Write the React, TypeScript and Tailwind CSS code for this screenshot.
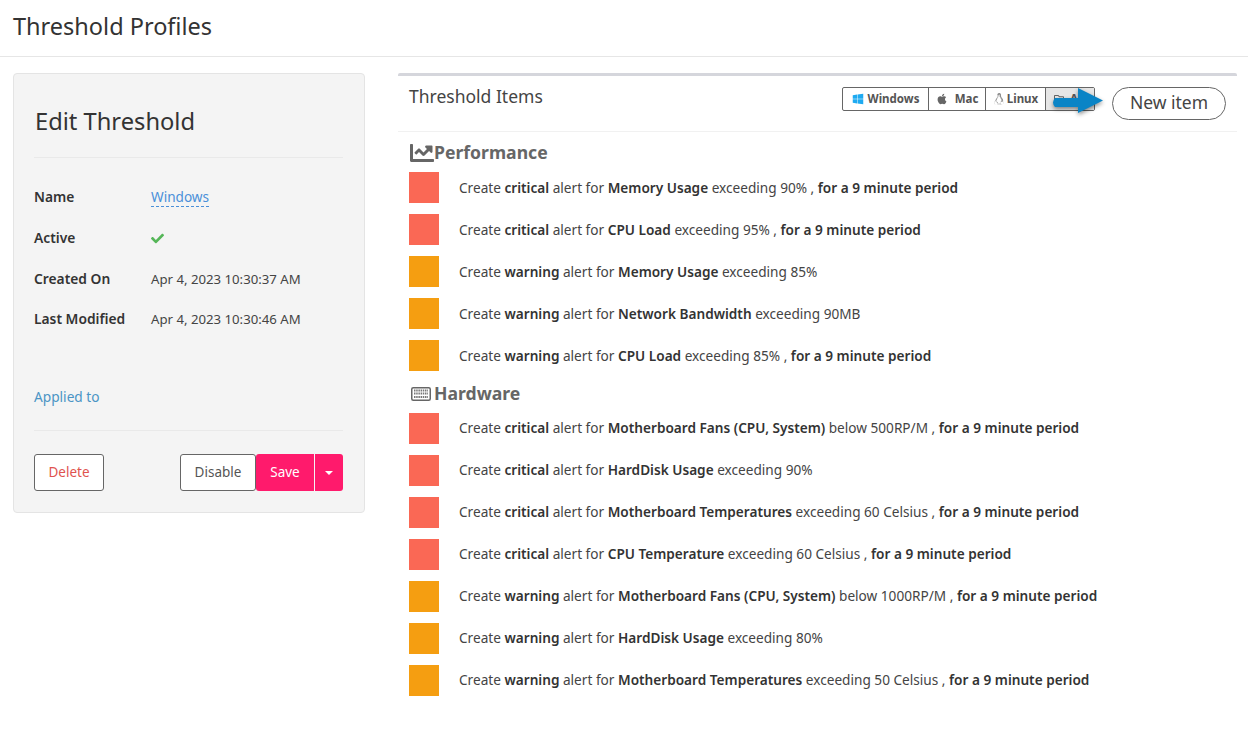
import { FaWindows, FaApple, FaLinux, FaChartLine, FaCheck, FaRegFolderOpen } from 'react-icons/fa'

// --- data ---
type Item = { level: 'critical' | 'warning'; metric: string; rest: string; period?: boolean }

const PERFORMANCE: Item[] = [
  { level: 'critical', metric: 'Memory Usage', rest: 'exceeding 90%', period: true },
  { level: 'critical', metric: 'CPU Load', rest: 'exceeding 95%', period: true },
  { level: 'warning', metric: 'Memory Usage', rest: 'exceeding 85%' },
  { level: 'warning', metric: 'Network Bandwidth', rest: 'exceeding 90MB' },
  { level: 'warning', metric: 'CPU Load', rest: 'exceeding 85%', period: true },
]

const HARDWARE: Item[] = [
  { level: 'critical', metric: 'Motherboard Fans (CPU, System)', rest: 'below 500RP/M', period: true },
  { level: 'critical', metric: 'HardDisk Usage', rest: 'exceeding 90%' },
  { level: 'critical', metric: 'Motherboard Temperatures', rest: 'exceeding 60 Celsius', period: true },
  { level: 'critical', metric: 'CPU Temperature', rest: 'exceeding 60 Celsius', period: true },
  { level: 'warning', metric: 'Motherboard Fans (CPU, System)', rest: 'below 1000RP/M', period: true },
  { level: 'warning', metric: 'HardDisk Usage', rest: 'exceeding 80%' },
  { level: 'warning', metric: 'Motherboard Temperatures', rest: 'exceeding 50 Celsius', period: true },
]

function Row({ item, tight }: { item: Item; tight?: boolean }) {
  return (
    <div className="flex items-center h-[31px] mb-[11px]">
      <div className={`w-[30px] h-[31px] shrink-0 ${item.level === 'critical' ? 'bg-[#fa6855]' : 'bg-[#f59e11]'}`}></div>
      <p className={`ml-[20px] text-[13.63px] text-[#444] whitespace-nowrap ${tight ? 'mt-0' : 'mt-[2px]'}`}>
        Create <b className="font-semibold text-[#333]">{item.level}</b> alert for{' '}
        <b className="font-semibold text-[#333]">{item.metric}</b> {item.rest}
        {item.period && (
          <>
            {' , '}
            <b className="font-semibold text-[#333]">for a 9 minute period</b>
          </>
        )}
      </p>
    </div>
  )
}

function InfoRow({ label, children }: { label: string; children: React.ReactNode }) {
  return (
    <div className="flex items-center h-[41px] last:h-[39px]">
      <div className="w-[117px] font-semibold text-[#333] text-[13.8px]">{label}</div>
      <div className="text-[13.2px] text-[#444]">{children}</div>
    </div>
  )
}

function KeyboardIcon() {
  return (
    <svg className="ml-[2px] mr-[3px] shrink-0" width="20" height="14" viewBox="0 0 20 14">
      <rect x="0.75" y="0.75" width="18.5" height="12.5" rx="1.5" fill="none" stroke="#666" strokeWidth="1.5" />
      <path d="M3 3.5h14M3 6.5h14M3 10h14" stroke="#777" strokeWidth="2" strokeDasharray="1.5 0.7" fill="none" />
    </svg>
  )
}

export default function App() {
  return (
    <div className="min-h-[732px] bg-white font-['Noto_Sans',sans-serif] text-[#333]">
      <header className="h-[57px] border-b border-[#e6e6e6] pl-[13px] flex items-center">
        <h1 className="text-[23.5px] leading-none text-[#333] mt-[-3px]">Threshold Profiles</h1>
      </header>

      <div className="flex items-start pt-4 pl-[13px] pr-[11px]">
        {/* left card */}
        <aside className="w-[352px] h-[440px] shrink-0 bg-[#f4f4f4] border border-[#e4e4e4] rounded-[4px] pl-5 pr-[21px] flex flex-col">
          <h2 className="text-[23.7px] leading-[24px] text-[#333] pt-[35px] pb-[24px] pl-px border-b border-[#e9e9e9]">Edit Threshold</h2>
          <div className="mt-[19px]">
            <InfoRow label="Name">
              <span className="text-[13.6px] text-[#4a90d9] border-b border-dashed border-[#4a90d9] leading-[18px] inline-block">Windows</span>
            </InfoRow>
            <InfoRow label="Active">
              <FaCheck className="text-[#55b658] text-[13px]" />
            </InfoRow>
            <InfoRow label="Created On">Apr 4, 2023 10:30:37 AM</InfoRow>
            <InfoRow label="Last Modified">Apr 4, 2023 10:30:46 AM</InfoRow>
          </div>
          <a className="mt-[48px] text-[13.7px] text-[#4b94c5] leading-[20px]">Applied to</a>
          <div className="mt-[23px] border-b border-[#e9e9e9]"></div>
          <div className="mt-[23px] flex items-stretch h-[37px]">
            <button className="w-[70px] bg-white border border-[#666] rounded-[3px] text-[13.5px] text-[#e0534f]">Delete</button>
            <div className="ml-auto flex">
              <button className="w-[76px] bg-white border border-[#666] rounded-[3px] text-[13.5px] text-[#555]">Disable</button>
              <button className="w-[58px] bg-[#ff1a6c] rounded-l-[3px] text-[13.5px] text-white">Save</button>
              <button className="w-[28px] ml-px bg-[#ff1a6c] rounded-r-[3px] flex items-center justify-center">
                <span className="w-0 h-0 border-x-[4px] border-x-transparent border-t-[4px] border-t-white"></span>
              </button>
            </div>
          </div>
        </aside>

        {/* right panel */}
        <main className="ml-[33px] flex-1 border-t-[3px] border-[#d5d6dc] rounded-t-[2px]">
          <div className="h-[56px] border-b border-[#f1f1f1] pl-[11px] pr-[11px] flex items-start">
            <h3 className="text-[17.5px] leading-none text-[#444] mt-[12px]">Threshold Items</h3>
            <div className="relative ml-auto mt-[11px] flex items-start">
              <div className="flex h-[24px] border border-[#666] rounded-[2px] text-[11.5px] font-bold text-[#555] bg-white">
                <span className="w-[86px] flex items-center justify-center gap-1 border-r border-[#666]">
                  <FaWindows className="text-[#1eaaf1] text-[12px]" />Windows
                </span>
                <span className="w-[57px] flex items-center justify-center gap-[7px] border-r border-[#666]">
                  <FaApple className="text-[#666] text-[12px]" />Mac
                </span>
                <span className="w-[60px] flex items-center justify-center gap-[2px] border-r border-[#666]">
                  <FaLinux className="text-[#888] text-[12px]" />Linux
                </span>
                <span className="w-[48px] bg-[#e6e6e6] flex items-center pl-2 gap-1">
                  <FaRegFolderOpen className="text-[#666] text-[12px]" />All
                </span>
              </div>
              <button className="ml-[17px] w-[114px] h-[33px] bg-white border border-[#666] rounded-full text-[17.5px] leading-none text-[#444] pb-[1px]">New item</button>
              {/* blue arrow annotation */}
              <svg className="absolute left-[210px] top-0 drop-shadow-[0_2px_2px_rgba(0,0,0,0.45)]" width="54" height="30" viewBox="0 0 54 30">
                <path d="M3 11 H26 V1 L51 13.5 L26 26 V20 H3 Q-1 15.5 3 11 Z" fill="#0a84c6" />
              </svg>
            </div>
          </div>

          <div className="pl-[11px] pt-[7px]">
            <h4 className="flex items-center h-[26px] pt-[2px] mb-[7px] text-[17.6px] font-bold text-[#666] leading-none">
              <FaChartLine className="ml-px text-[24px] text-[#666] shrink-0" />Performance
            </h4>
            {PERFORMANCE.map((item, i) => (
              <Row key={i} item={item} />
            ))}
            <h4 className="flex items-center h-[26px] pt-[2px] mt-[-2px] mb-[7px] text-[17.6px] font-bold text-[#666] leading-none">
              <KeyboardIcon />Hardware
            </h4>
            {HARDWARE.map((item, i) => (
              <Row key={i} item={item} tight />
            ))}
          </div>
        </main>
      </div>
    </div>
  )
}
